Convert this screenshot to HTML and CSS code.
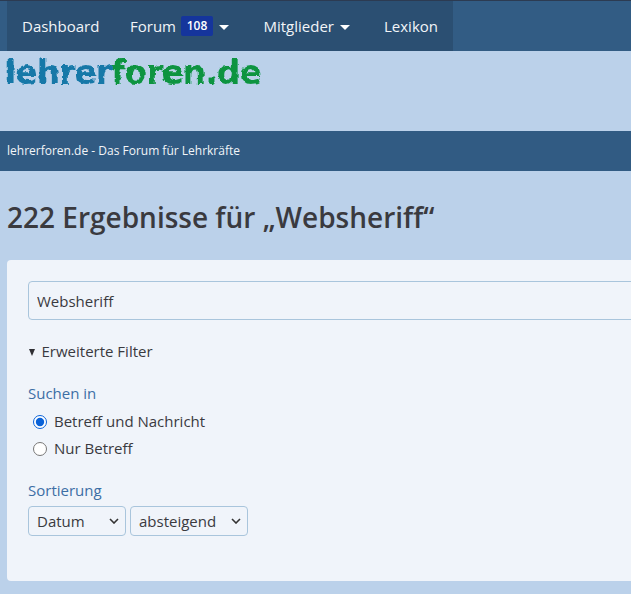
FILE: index.html
```html
<!DOCTYPE html>
<html lang="de">
<head>
<meta charset="utf-8">
<title>222 Ergebnisse für „Websheriff“</title>
<link rel="stylesheet" href="styles.css">
</head>
<body>
<svg class="defs" width="0" height="0" aria-hidden="true">
  <filter id="rough" x="-5%" y="-15%" width="110%" height="130%">
    <feTurbulence type="fractalNoise" baseFrequency="0.16" numOctaves="3" seed="7"/>
    <feDisplacementMap in="SourceGraphic" scale="4" xChannelSelector="R" yChannelSelector="G"/>
  </filter>
</svg>
<header class="topbar">
  <nav class="mainnav">
    <a class="navitem">Dashboard</a>
    <a class="navitem">Forum<span class="badge">108</span><span class="caret"></span></a>
    <a class="navitem">Mitglieder<span class="caret"></span></a>
    <a class="navitem">Lexikon</a>
  </nav>
</header>
<div class="logoband">
  <div class="logo"><span class="logo-a">lehrer</span><span class="logo-b">foren.de</span></div>
</div>
<div class="subbar">lehrerforen.de - Das Forum für Lehrkräfte</div>
<main class="content">
  <h1 class="title">222 Ergebnisse für „Websheriff“</h1>
  <form class="panel">
    <input class="searchinput" type="text" value="Websheriff">
    <div class="filtertoggle"><span class="tri"></span>Erweiterte Filter</div>
    <div class="grouplabel">Suchen in</div>
    <label class="radio"><input type="radio" name="in" checked>Betreff und Nachricht</label>
    <label class="radio"><input type="radio" name="in">Nur Betreff</label>
    <div class="grouplabel sort">Sortierung</div>
    <div class="selects">
      <select class="sel sel-a"><option>Datum</option></select>
      <select class="sel sel-b"><option>absteigend</option></select>
    </div>
  </form>
</main>
</body>
</html>
```
FILE: styles.css
```css
* { box-sizing: border-box; }
html, body { margin: 0; padding: 0; overflow: hidden; }
body {
  width: 631px;
  height: 594px;
  background: #bbd1ea;
  font-family: "Open Sans", sans-serif;
  font-size: 15px;
  color: #3a3a3f;
}
.defs { position: absolute; }
.topbar {
  height: 51px;
  background: #325c84;
  border-top: 1px solid #2c3b52;
  padding-left: 7px;
}
.mainnav {
  width: 446px;
  height: 50px;
  background: #2b4f72;
  display: flex;
  align-items: center;
  padding-left: 15px;
}
.navitem {
  color: #f2f5f8;
  font-size: 15px;
  line-height: 20px;
  display: flex;
  align-items: center;
  white-space: pre;
}
.navitem:nth-child(1) { width: 108px; }
.navitem:nth-child(2) { width: 133.5px; }
.navitem:nth-child(3) { width: 120.5px; }
.badge {
  background: #15359c;
  color: #fff;
  font-size: 12px;
  font-weight: 600;
  line-height: 20px;
  height: 20px;
  width: 32px;
  border-radius: 2px;
  text-align: center;
  margin-left: 5px;
}
.caret {
  width: 0;
  height: 0;
  border-left: 5px solid transparent;
  border-right: 5px solid transparent;
  border-top: 5px solid #fff;
  margin-left: 6px;
  margin-top: 2px;
}
.logoband {
  height: 80px;
  padding-left: 5px;
  padding-top: 1px;
}
.logo {
  font-family: "DejaVu Sans", sans-serif;
  font-weight: 700;
  font-size: 33px;
  line-height: 42px;
  height: 42px;
  letter-spacing: -1px;
  filter: url(#rough);
  white-space: nowrap;
}
.logo-a { color: #1478a8; }
.logo-b { color: #0b9440; }
.subbar {
  height: 40px;
  background: #315b83;
  color: #f2f5f8;
  font-size: 12px;
  line-height: 40px;
  padding-left: 7px;
}
.content { padding: 0 0 0 7px; }
.title {
  margin: 0;
  padding-top: 28px;
  height: 89px;
  font-size: 28px;
  line-height: 36px;
  font-weight: 600;
  color: #3a3a3f;
  white-space: nowrap;
}
.panel {
  width: 700px;
  height: 321px;
  background: #f0f4fa;
  border-radius: 4px;
  padding: 21px;
}
.searchinput {
  display: block;
  width: 660px;
  height: 39px;
  border: 1px solid #a9c5dc;
  border-radius: 4px;
  background: #f0f4fa;
  padding: 0 8px;
  font: 15px "Open Sans", sans-serif;
  color: #3a3a3f;
}
.filtertoggle {
  margin-top: 20px;
  height: 22px;
  line-height: 22px;
  display: flex;
  align-items: center;
  font-size: 15px;
}
.tri {
  width: 0;
  height: 0;
  border-left: 3.5px solid transparent;
  border-right: 3.5px solid transparent;
  border-top: 7px solid #2f2f33;
  margin-right: 7px;
  margin-top: 2px;
  margin-left: 0.5px;
}
.grouplabel {
  margin-top: 20px;
  height: 22px;
  line-height: 22px;
  color: #3c6ea5;
  font-size: 15px;
}
.radio {
  display: flex;
  align-items: center;
  height: 27px;
  line-height: 27px;
  font-size: 15px;
}
.radio:first-of-type { margin-top: 4px; }
.radio input {
  width: 14px;
  height: 14px;
  margin: 0 7px 0 5px;
  accent-color: #0a62d8;
}
.grouplabel.sort { margin-top: 17px; }
.selects {
  display: flex;
  gap: 4px;
  margin-top: 5px;
}
.sel {
  appearance: none;
  height: 30px;
  border: 1px solid #a9c5dc;
  border-radius: 4px;
  background-color: #f0f4fa;
  background-image: url("data:image/svg+xml,%3Csvg xmlns='http://www.w3.org/2000/svg' width='10' height='6'%3E%3Cpath d='M1 1l4 4 4-4' fill='none' stroke='%23333' stroke-width='1.6'/%3E%3C/svg%3E");
  background-repeat: no-repeat;
  background-position: right 6px center;
  font: 15px "Open Sans", sans-serif;
  color: #3a3a3f;
  padding: 0 8px;
}
.sel-a { width: 98px; }
.sel-b { width: 118px; }
```
